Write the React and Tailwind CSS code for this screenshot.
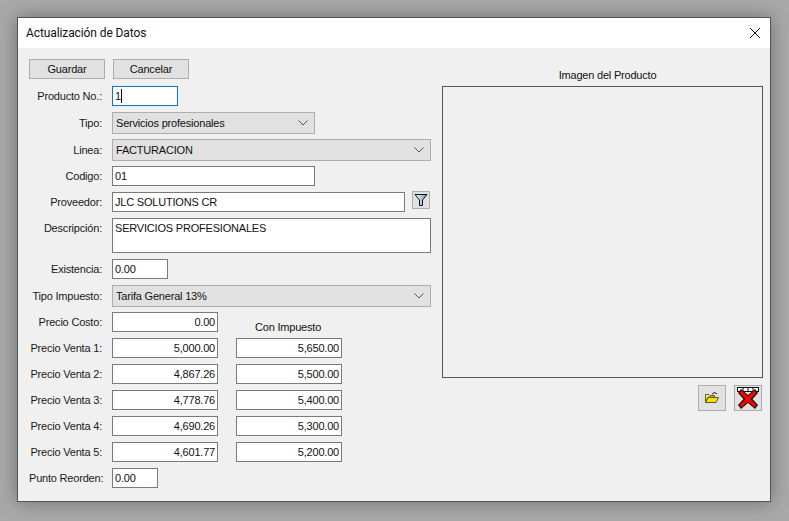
import React from 'react';

const Label = ({ children, select }) => (
  <div className={`w-[73px] shrink-0 mr-[10px] text-right whitespace-nowrap text-[#1a1a1a] leading-[16px] ${select ? 'pt-[3px]' : 'pt-[2px]'}`}>{children}</div>
);

const Input = ({ value, w, right, h = 'h-[20px]' }) => (
  <div className={`${w} ${h} shrink-0 bg-white border border-[#7a7a7a] px-[2px] leading-[18px] whitespace-nowrap ${right ? 'text-right' : ''}`}>
    {value}
  </div>
);

const Select = ({ value, w }) => (
  <div className={`${w} h-[22px] shrink-0 bg-[#e1e1e1] border border-[#adadad] pl-[3px] pr-[6px] flex items-center justify-between`}>
    <span>{value}</span>
    <svg width="10" height="6" viewBox="0 0 10 6" fill="none" stroke="#555" strokeWidth="1">
      <path d="M0.5 0.5 L5 5 L9.5 0.5" />
    </svg>
  </div>
);

const Row = ({ label, children, select, className = 'mt-[6px]' }) => (
  <div className={`flex items-start ${className}`}>
    <Label select={select}>{label}</Label>
    {children}
  </div>
);

const PriceRow = ({ n, a, b }) => (
  <Row label={`Precio Venta ${n}:`}>
    <Input value={a} w="w-[106px]" right />
    <div className="ml-[18px]">
      <Input value={b} w="w-[106px]" right />
    </div>
  </Row>
);

const FilterIcon = () => (
  <svg width="14" height="14" viewBox="0 0 14 14">
    <defs>
      <linearGradient id="fg" x1="0" x2="1" y1="0" y2="0">
        <stop offset="0" stopColor="#ffffff" />
        <stop offset="1" stopColor="#6f97c4" />
      </linearGradient>
    </defs>
    <path d="M1 1.5 H13 L8.5 7 V12.5 H5.5 V7 Z" fill="url(#fg)" stroke="#111" strokeWidth="1" />
  </svg>
);

const FolderIcon = () => (
  <svg width="14" height="12" viewBox="0 0 14 12">
    <path d="M7 2 Q9 0 11 1 L12 2" fill="none" stroke="#222" strokeWidth="1" />
    <path d="M0.5 2.5 H4 L5 3.5 H9.5 V5 H3 L0.5 10.5 Z" fill="#fff56a" stroke="#5a5a30" strokeWidth="1" />
    <path d="M0.5 10.5 L3 5.5 H13.5 L11 10.5 Z" fill="#f8e000" stroke="#5a5a30" strokeWidth="1" />
  </svg>
);

const DeleteIcon = () => (
  <svg width="22" height="22" viewBox="0 0 22 22">
    <rect x="0.5" y="0.5" width="21" height="4" fill="#fff" stroke="#111" />
    <path d="M6 0.5 V4.5 M11 0.5 V4.5 M16 0.5 V4.5" stroke="#111" />
    <path d="M4 2 L11 8 L18 2 L21 6 L15.5 12 L21 18 L18 22 L11 16 L4 22 L1 18 L6.5 12 L1 6 Z" fill="#111" />
    <path d="M4.5 3.5 L11 9.5 L17.5 3.5 L19.5 6 L13.5 12 L19.5 18 L17.5 20.5 L11 14.5 L4.5 20.5 L2.5 18 L8.5 12 L2.5 6 Z" fill="#ff0000" />
  </svg>
);

export default function App() {
  return (
    <div className="font-['Liberation_Sans',Arial,sans-serif] w-[789px] h-[521px] overflow-hidden bg-[#a9a9a9] pt-[17px] pl-[17px] text-[11px] tracking-[-0.2px] text-[#111]">
      <div className="w-[754px] h-[485px] border border-[#555] bg-[#f0f0f0] shadow-[0_0_18px_rgba(0,0,0,0.35)]">
        {/* barra de titulo */}
        <div className="h-[30px] bg-white flex items-center justify-between pl-[8px] pr-[9px]">
          <span className="text-[#111] text-[12px] tracking-[-0.1px] font-['Roboto',sans-serif]">Actualización de Datos</span>
          <svg width="12" height="12" viewBox="0 0 12 12" stroke="#111" strokeWidth="1" fill="none">
            <path d="M1 1 L11 11 M11 1 L1 11" />
          </svg>
        </div>

        <div className="flex pl-[11px] pt-[11px]">
          {/* formulario */}
          <div className="w-[413px] shrink-0">
            <div className="flex gap-[8px]">
              <button className="w-[76px] h-[20px] bg-[#e1e1e1] border border-[#adadad] leading-[17px]">Guardar</button>
              <button className="w-[76px] h-[20px] bg-[#e1e1e1] border border-[#adadad] leading-[17px]">Cancelar</button>
            </div>
            <Row label="Producto No.:" className="mt-[7px]">
              <div className="w-[66px] h-[20px] bg-white border border-[#0078d7] px-[2px] leading-[17px] flex items-center">
                <span>1</span>
                <span className="w-px h-[14px] bg-black" />
              </div>
            </Row>
            <Row label="Tipo:" select>
              <Select value="Servicios profesionales" w="w-[203px]" />
            </Row>
            <Row label="Linea:" select className="mt-[5px]">
              <Select value="FACTURACION" w="w-[319px]" />
            </Row>
            <Row label="Codigo:" className="mt-[5px]">
              <Input value="01" w="w-[203px]" />
            </Row>
            <Row label="Proveedor:">
              <Input value="JLC SOLUTIONS CR" w="w-[293px]" />
              <div className="ml-[7px] -mt-[1px] w-[18px] h-[18px] bg-[#e1e1e1] border border-[#adadad] flex items-center justify-center">
                <FilterIcon />
              </div>
            </Row>
            <Row label="Descripción:">
              <Input value="SERVICIOS PROFESIONALES" w="w-[319px]" h="h-[35px]" />
            </Row>
            <Row label="Existencia:">
              <Input value="0.00" w="w-[56px]" />
            </Row>
            <Row label="Tipo Impuesto:" select>
              <Select value="Tarifa General 13%" w="w-[319px]" />
            </Row>
            <Row label="Precio Costo:" className="mt-[5px] h-[20px]">
              <Input value="0.00" w="w-[106px]" right />
              <div className="ml-[37px] mt-[7px] leading-[16px] whitespace-nowrap">Con Impuesto</div>
            </Row>
            <PriceRow n={1} a="5,000.00" b="5,650.00" />
            <PriceRow n={2} a="4,867.26" b="5,500.00" />
            <PriceRow n={3} a="4,778.76" b="5,400.00" />
            <PriceRow n={4} a="4,690.26" b="5,300.00" />
            <PriceRow n={5} a="4,601.77" b="5,200.00" />
            <Row label="Punto Reorden:">
              <Input value="0.00" w="w-[46px]" />
            </Row>
          </div>

          {/* imagen */}
          <div className="w-[321px] shrink-0">
            <div className="text-center leading-[16px] mt-[8px] mb-[3px] pl-[10px]">Imagen del Producto</div>
            <div className="h-[292px] border border-[#555]" />
            <div className="flex justify-end gap-[8px] mt-[7px] pr-[1px]">
              <button className="w-[28px] h-[26px] bg-[#e1e1e1] border border-[#adadad] flex items-center justify-center">
                <FolderIcon />
              </button>
              <button className="w-[28px] h-[26px] bg-[#e1e1e1] border border-[#adadad] flex items-center justify-center">
                <DeleteIcon />
              </button>
            </div>
          </div>
        </div>
      </div>
    </div>
  );
}
